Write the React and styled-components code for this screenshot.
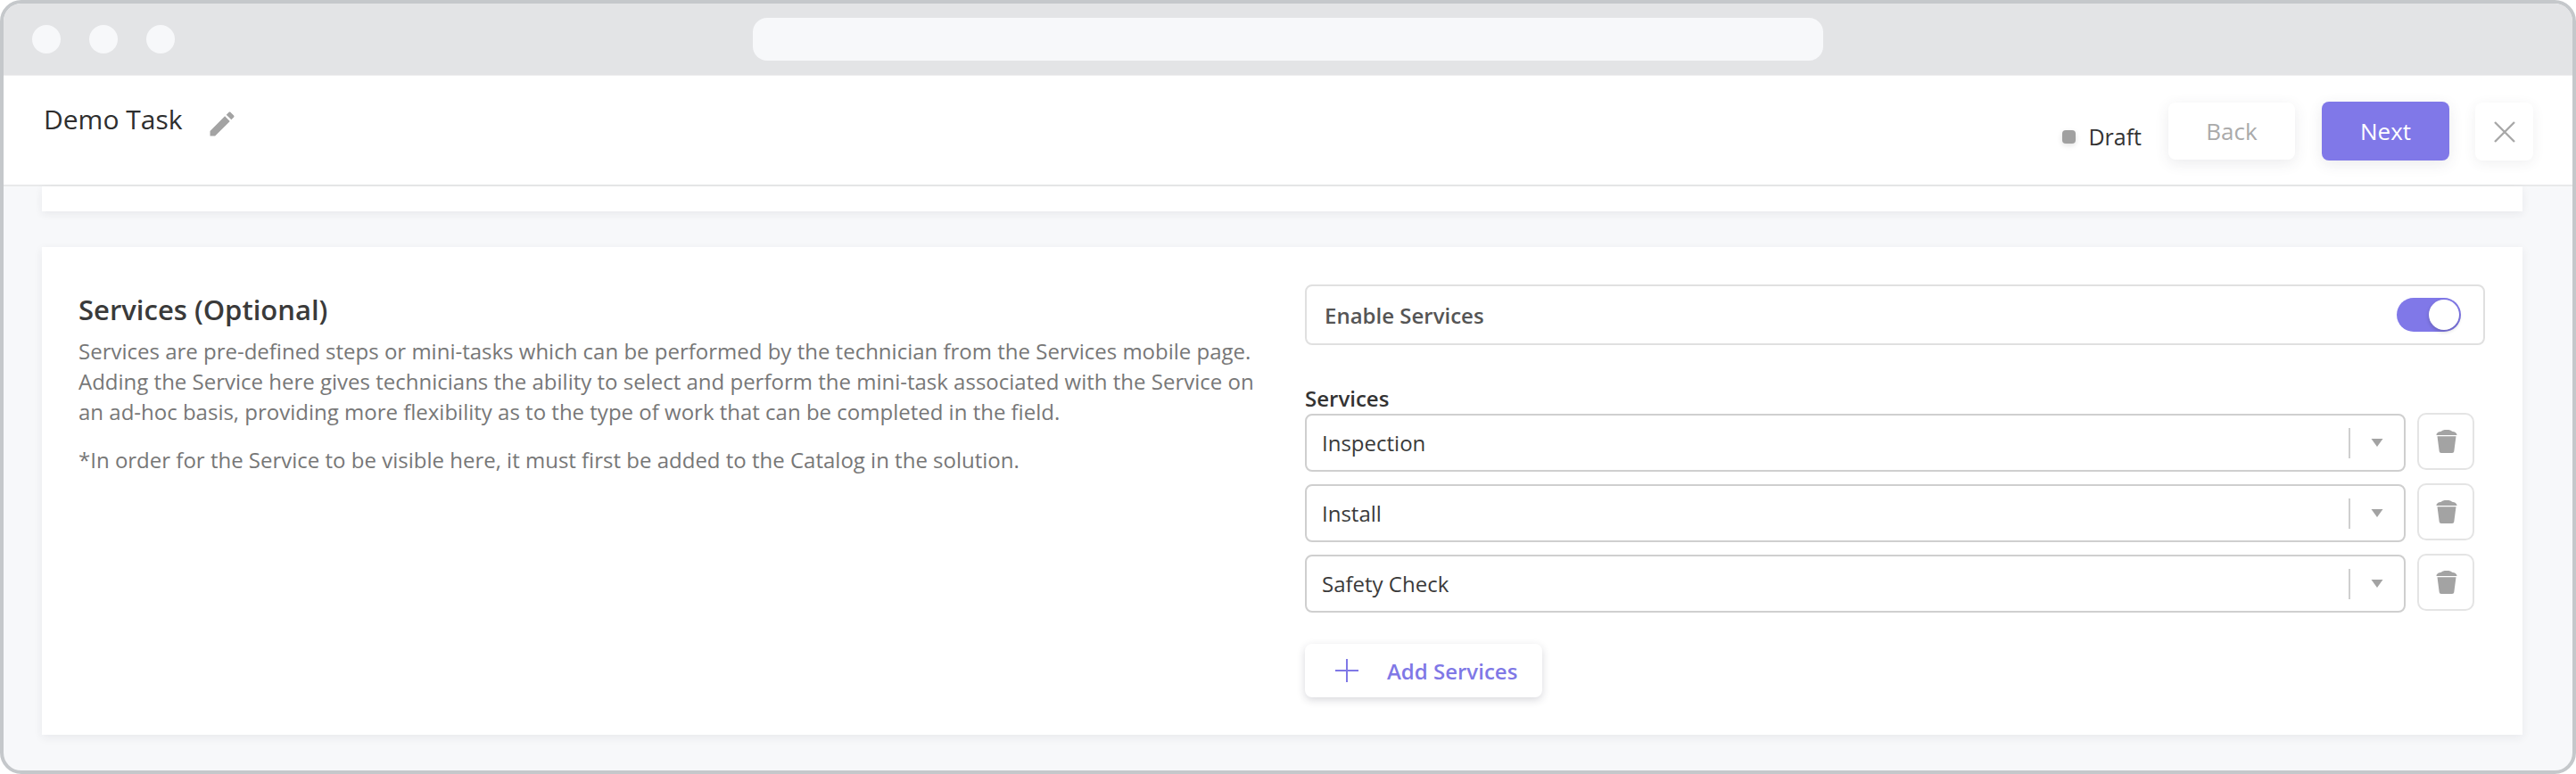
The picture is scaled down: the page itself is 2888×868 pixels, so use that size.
import React from 'react';
import styled, { createGlobalStyle } from 'styled-components';

const GlobalStyle = createGlobalStyle`
  * { box-sizing: border-box; }
  body {
    margin: 0;
    background: #fff;
    font-family: "Open Sans", "Noto Sans", sans-serif;
  }
`;

const Frame = styled.div`
  width: 2888px;
  height: 868px;
  border: 4px solid #c5c8cb;
  border-radius: 24px;
  background: #f7f8fa;
  overflow: hidden;
  display: flex;
  flex-direction: column;
`;

const TitleBar = styled.div`
  height: 81px;
  flex-shrink: 0;
  background: #e3e4e6;
  border-bottom: 1px solid #eeeeef;
  display: flex;
  align-items: center;
  padding: 0 32px;
`;

const Dots = styled.div`
  display: flex;
  gap: 32px;
`;

const Dot = styled.span`
  width: 32px;
  height: 32px;
  border-radius: 50%;
  background: #f7f8fa;
`;

const AddressBar = styled.div`
  width: 1200px;
  height: 48px;
  border-radius: 16px;
  background: #f7f8fa;
  margin-left: 648px;
`;

const Header = styled.header`
  height: 124px;
  flex-shrink: 0;
  background: #fff;
  border-bottom: 2px solid #e8e9ea;
  display: flex;
  justify-content: space-between;
  padding: 29px 44px 0 45px;
`;

const TitleGroup = styled.div`
  display: flex;
  align-items: flex-start;
  gap: 27px;
`;

const Title = styled.h1`
  margin: 1px 0 0;
  font-size: 30px;
  line-height: 38px;
  font-weight: 400;
  color: #2e2e2e;
`;

const PencilIcon = styled.svg`
  width: 36px;
  height: 36px;
  margin-top: 7px;
  fill: #a3a3a3;
`;

const Actions = styled.div`
  display: flex;
  align-items: flex-start;
`;

const Status = styled.div`
  display: flex;
  align-items: center;
  gap: 14px;
  height: 38px;
  margin: 20px 30px 0 0;
  font-size: 25px;
  color: #333;
`;

const StatusDot = styled.span`
  width: 15px;
  height: 15px;
  border-radius: 4px;
  background: #a0a0a0;
  box-shadow: 0 2px 6px rgba(0, 0, 0, 0.12);
`;

const Button = styled.button`
  width: ${props => props.$wide ? '143px' : '142px'};
  height: ${props => props.$wide ? '66px' : '64px'};
  margin: ${props => props.$wide ? '0 29px 0 30px' : '1px 0 0 0'};
  border: none;
  border-radius: 8px;
  font-family: inherit;
  font-size: 26px;
  background: ${props => props.$primary ? '#8078e8' : '#fff'};
  color: ${props => props.$primary ? '#fff' : '#aaa'};
  box-shadow: 0 4px 16px rgba(60, 60, 80, 0.1);
`;

const CloseButton = styled.button`
  width: 65px;
  height: 65px;
  margin-top: 1px;
  padding: 0;
  border: none;
  border-radius: 8px;
  background: #fff;
  box-shadow: 0 3px 14px rgba(60, 60, 80, 0.08);
  display: flex;
  align-items: center;
  justify-content: center;
`;

const Content = styled.main`
  flex: 1;
  padding: 0 56px 40px 43px;
  display: flex;
  flex-direction: column;
  gap: 40px;
  min-height: 0;
`;

const Card = styled.section`
  background: #fff;
  box-shadow: 0 3px 10px rgba(40, 40, 60, 0.07);
`;

const StubCard = styled(Card)`
  height: 28px;
  flex-shrink: 0;
`;

const ServicesCard = styled(Card)`
  flex: 1;
  display: grid;
  grid-template-columns: 1320px 1323px;
  column-gap: 55px;
  padding: 42px 42px 0 41px;
`;

const SectionTitle = styled.h2`
  margin: 8px 0 0;
  font-size: 31px;
  line-height: 40px;
  font-weight: 600;
  color: #3a3a3a;
`;

const Paragraph = styled.p`
  margin: ${props => props.$note ? '20px 0 0' : '10px 0 0'};
  font-size: 24px;
  line-height: 34px;
  color: #777;
`;

const Side = styled.div`
  display: flex;
  flex-direction: column;
  align-items: flex-start;
`;

const EnableBox = styled.div`
  width: 100%;
  height: 68px;
  border: 2px solid #e0e0e0;
  border-radius: 8px;
  display: flex;
  align-items: center;
  justify-content: space-between;
  padding: 0 25px 0 20px;
  font-size: 24px;
  font-weight: 600;
  color: #555;
`;

const Toggle = styled.div`
  width: 72px;
  height: 38px;
  border-radius: 19px;
  background: #8078e8;
  padding: 2px 1px 2px 36px;
`;

const ToggleKnob = styled.span`
  display: block;
  width: 34px;
  height: 34px;
  border-radius: 50%;
  background: #fff;
  box-shadow: 0 2px 4px rgba(0, 0, 0, 0.2);
`;

const FieldLabel = styled.label`
  margin-top: 43px;
  font-size: 24px;
  line-height: 33px;
  font-weight: 600;
  color: #333;
`;

const Rows = styled.div`
  display: flex;
  flex-direction: column;
  gap: 13px;
`;

const Row = styled.div`
  display: flex;
  align-items: flex-start;
  gap: 13px;
  height: 66px;
`;

const Select = styled.div`
  width: 1234px;
  height: 65px;
  margin-top: 1px;
  border: 2px solid #cfcfcf;
  border-radius: 8px;
  display: flex;
  align-items: center;
  padding-left: 17px;
  font-size: 24px;
  color: #3a3a3a;
`;

const SelectValue = styled.span`
  flex: 1;
`;

const SelectDivider = styled.span`
  width: 2px;
  height: 34px;
  background: #cfcfcf;
`;

const Caret = styled.svg`
  width: 14px;
  height: 9px;
  margin: 0 23px;
  fill: #a3a3a3;
`;

const TrashButton = styled.button`
  width: 64px;
  height: 64px;
  padding: 0 0 0 2px;
  border: 2px solid #e4e4e4;
  border-radius: 10px;
  background: #fff;
  display: flex;
  align-items: center;
  justify-content: center;
`;

const AddButton = styled.button`
  margin-top: 35px;
  width: 266px;
  height: 60px;
  border: none;
  border-radius: 8px;
  background: #fff;
  box-shadow: 0 3px 10px rgba(40, 40, 60, 0.18);
  display: flex;
  align-items: center;
  gap: 32px;
  padding: 0 0 0 34px;
  font-family: inherit;
  font-size: 24px;
  font-weight: 600;
  color: #7f78e6;
`;

const TrashIcon = () => (
  <svg width="24" height="26" viewBox="0 0 24 26" fill="#a3a3a3">
    <path d="M0.5 6C0.5 3.5 3 2.2 6 1.8C7 0.5 8.5 0 12 0C15.5 0 17 0.5 18 1.8C21 2.2 23.5 3.5 23.5 6Z" />
    <path d="M1.5 7.2H22.5L20.3 24C20.2 25.2 19.4 26 18 26H6C4.6 26 3.8 25.2 3.7 24Z" />
  </svg>
);

const services = ['Inspection', 'Install', 'Safety Check'];

export default function App() {
  return (
    <>
      <GlobalStyle />
      <Frame>
        <TitleBar>
          <Dots>
            <Dot />
            <Dot />
            <Dot />
          </Dots>
          <AddressBar />
        </TitleBar>
        <Header>
          <TitleGroup>
            <Title>Demo Task</Title>
            <PencilIcon viewBox="0 0 24 24">
              <path d="M3 17.25V21h3.75L17.81 9.94l-3.75-3.75L3 17.25zM20.71 7.04c.39-.39.39-1.02 0-1.41l-2.34-2.34c-.39-.39-1.02-.39-1.41 0l-1.83 1.83 3.75 3.75 1.83-1.83z" />
            </PencilIcon>
          </TitleGroup>
          <Actions>
            <Status>
              <StatusDot />
              Draft
            </Status>
            <Button>Back</Button>
            <Button $primary $wide>Next</Button>
            <CloseButton aria-label="Close">
              <svg width="24" height="24" viewBox="0 0 24 24" stroke="#a8a8a8" strokeWidth="2.4">
                <path d="M1 1L23 23M23 1L1 23" />
              </svg>
            </CloseButton>
          </Actions>
        </Header>
        <Content>
          <StubCard />
          <ServicesCard>
            <div>
              <SectionTitle>Services (Optional)</SectionTitle>
              <Paragraph>
                Services are pre-defined steps or mini-tasks which can be performed by the technician from the Services mobile page. Adding the Service here gives technicians the ability to select and perform the mini-task associated with the Service on an ad-hoc basis, providing more flexibility as to the type of work that can be completed in the field.
              </Paragraph>
              <Paragraph $note>
                *In order for the Service to be visible here, it must first be added to the Catalog in the solution.
              </Paragraph>
            </div>
            <Side>
              <EnableBox>
                Enable Services
                <Toggle>
                  <ToggleKnob />
                </Toggle>
              </EnableBox>
              <FieldLabel>Services</FieldLabel>
              <Rows>
                {services.map(name => (
                  <Row key={name}>
                    <Select>
                      <SelectValue>{name}</SelectValue>
                      <SelectDivider />
                      <Caret viewBox="0 0 14 9">
                        <path d="M0.5 0H13.5L7 9Z" />
                      </Caret>
                    </Select>
                    <TrashButton aria-label={`Remove ${name}`}>
                      <TrashIcon />
                    </TrashButton>
                  </Row>
                ))}
              </Rows>
              <AddButton>
                <svg width="26" height="26" viewBox="0 0 26 26" stroke="#7f78e6" strokeWidth="2">
                  <path d="M13 0V26M0 13H26" />
                </svg>
                Add Services
              </AddButton>
            </Side>
          </ServicesCard>
        </Content>
      </Frame>
    </>
  );
}
